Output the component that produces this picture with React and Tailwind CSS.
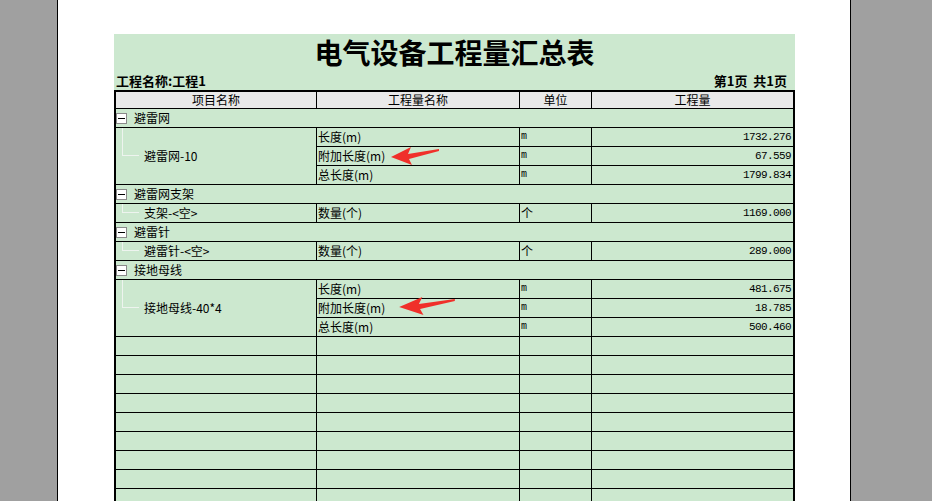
import React from 'react'

const cjk = { fontFamily: '"Noto Sans CJK SC", "Noto Sans", sans-serif' }
const mono = { fontFamily: '"Liberation Mono", "Noto Sans CJK SC", monospace' }

const groups = [
  {
    name: '避雷网',
    item: '避雷网-10',
    rows: [
      ['长度(m)', 'm', '1732.276'],
      ['附加长度(m)', 'm', '67.559'],
      ['总长度(m)', 'm', '1799.834'],
    ],
  },
  { name: '避雷网支架', item: '支架-<空>', rows: [['数量(个)', '个', '1169.000']] },
  { name: '避雷针', item: '避雷针-<空>', rows: [['数量(个)', '个', '289.000']] },
  {
    name: '接地母线',
    item: '接地母线-40*4',
    rows: [
      ['长度(m)', 'm', '481.675'],
      ['附加长度(m)', 'm', '18.785'],
      ['总长度(m)', 'm', '500.460'],
    ],
  },
]

const cell = 'border-r border-b border-black'

function Arrow({ className, width = 50 }) {
  return (
    <svg className={className} viewBox="0 0 50 20" width={width} height="20" preserveAspectRatio="none">
      <polygon points="1,11 21,1 18,8 49,3 49,5 19,13 22,19" fill="#f0302a" />
    </svg>
  )
}

export default function App() {
  const emptyRows = Array.from({ length: 9 })

  return (
    <div className="relative flex h-screen w-full overflow-hidden bg-[#a0a0a0]" style={cjk}>
      <div className="w-[58px] shrink-0 border-r border-black" />
      <div className="w-[792px] shrink-0 bg-white pl-[56px] pt-[34px]">
        <div className="w-[681px] bg-[#cce8cf] text-black">
          {/* Title */}
          <div className="h-[36px] flex items-center justify-center">
            <h1 className="text-[28px] font-semibold leading-none">电气设备工程量汇总表</h1>
          </div>
          <div className="h-[20px] flex items-center justify-between pl-[2px] pr-[8px] text-[13px] font-bold leading-none">
            <span>工程名称:工程1</span>
            <span>第1页&nbsp; 共1页</span>
          </div>

          {/* Table */}
          <div className="border-2 border-black border-b-0">
            <div className="grid grid-cols-[201px_203px_72px_201px] grid-rows-[17px] auto-rows-[19px] text-[12px] leading-none">
              {['项目名称', '工程量名称', '单位', '工程量'].map((h, i) => (
                <div
                  key={h}
                  className={`${i < 3 ? 'border-r' : ''} border-b border-black bg-[#e9e9e9] flex items-center justify-center`}
                >
                  {h}
                </div>
              ))}

              {groups.map((g) => (
                <React.Fragment key={g.name}>
                  <div className="col-span-4 border-b border-black flex items-center">
                    <span className="w-[11px] h-[11px] border border-[#8a8a8a] bg-white flex items-center justify-center">
                      <span className="w-[7px] h-[1px] bg-black" />
                    </span>
                    <span className="ml-[7px]">{g.name}</span>
                  </div>
                  {g.rows.map((r, idx) => (
                    <React.Fragment key={r[0]}>
                      {idx === 0 && (
                        <div
                          className={`${cell} relative flex items-center pl-[28px] ${
                            g.rows.length === 3 ? 'row-span-3' : ''
                          }`}
                        >
                          <span className="absolute left-[6px] top-0 h-1/2 w-[17px] border-l border-b border-[#eef4ef]" />
                          <span>{g.item}</span>
                        </div>
                      )}
                      <div className={`${cell} flex items-center pl-[1px]`}>{r[0]}</div>
                      <div
                        className={`${cell} flex items-center pl-[1px] ${r[1] === 'm' ? 'text-[10px]' : ''}`}
                        style={r[1] === 'm' ? mono : undefined}
                      >
                        {r[1]}
                      </div>
                      <div
                        className="border-b border-black flex items-center justify-end pr-[2px] text-[11px] tracking-[-0.6px]"
                        style={mono}
                      >
                        {r[2]}
                      </div>
                    </React.Fragment>
                  ))}
                </React.Fragment>
              ))}

              {emptyRows.map((_, i) => (
                <React.Fragment key={i}>
                  <div className={cell} />
                  <div className={cell} />
                  <div className={cell} />
                  <div className="border-b border-black" />
                </React.Fragment>
              ))}
            </div>
          </div>
        </div>
      </div>
      <div className="w-px shrink-0 bg-black" />
      <div className="flex-1" />

      {/* annotation arrows */}
      <Arrow className="absolute left-[390px] top-[146px]" />
      <Arrow className="absolute left-[398px] top-[296px]" width={58} />
    </div>
  )
}
